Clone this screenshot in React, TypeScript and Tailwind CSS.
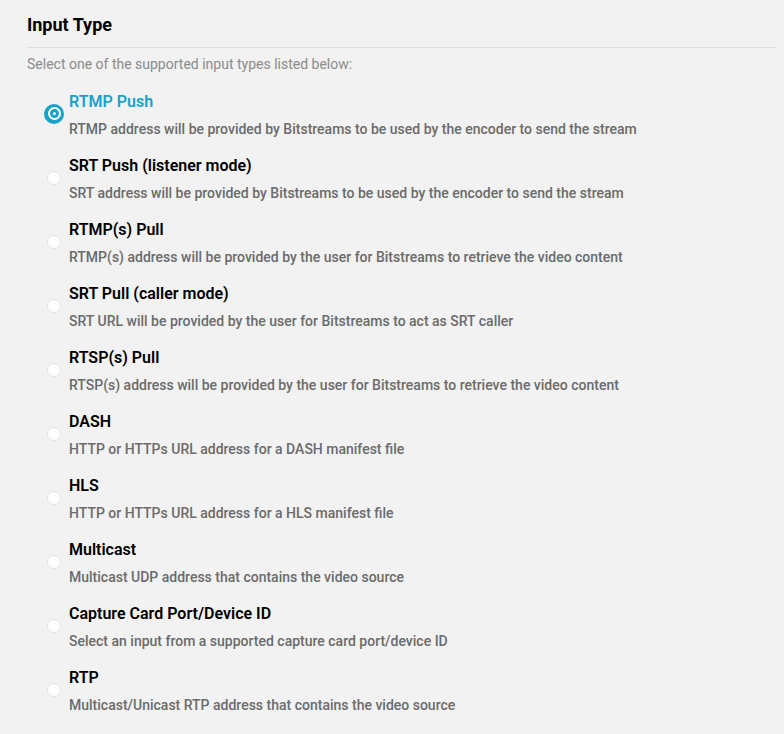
const inputTypes = [
  {
    id: 'rtmp-push',
    title: 'RTMP Push',
    body: 'RTMP address will be provided by Bitstreams to be used by the encoder to send the stream',
  },
  {
    id: 'srt-push',
    title: 'SRT Push (listener mode)',
    body: 'SRT address will be provided by Bitstreams to be used by the encoder to send the stream',
  },
  {
    id: 'rtmp-pull',
    title: 'RTMP(s) Pull',
    body: 'RTMP(s) address will be provided by the user for Bitstreams to retrieve the video content',
  },
  {
    id: 'srt-pull',
    title: 'SRT Pull (caller mode)',
    body: 'SRT URL will be provided by the user for Bitstreams to act as SRT caller',
  },
  {
    id: 'rtsp-pull',
    title: 'RTSP(s) Pull',
    body: 'RTSP(s) address will be provided by the user for Bitstreams to retrieve the video content',
  },
  {
    id: 'dash',
    title: 'DASH',
    body: 'HTTP or HTTPs URL address for a DASH manifest file',
  },
  {
    id: 'hls',
    title: 'HLS',
    body: 'HTTP or HTTPs URL address for a HLS manifest file',
  },
  {
    id: 'multicast',
    title: 'Multicast',
    body: 'Multicast UDP address that contains the video source',
  },
  {
    id: 'capture',
    title: 'Capture Card Port/Device ID',
    body: 'Select an input from a supported capture card port/device ID',
  },
  {
    id: 'rtp',
    title: 'RTP',
    body: 'Multicast/Unicast RTP address that contains the video source',
  },
]

function Radio({ checked }: { checked: boolean }) {
  if (checked) {
    return (
      <span className="w-5 h-5 rounded-full bg-[#16a2c9] flex items-center justify-center">
        <span className="w-[13px] h-[13px] rounded-full border-2 border-white bg-[#16a2c9] flex items-center justify-center">
          <span className="w-[3px] h-[3px] rounded-full bg-white" />
        </span>
      </span>
    )
  }
  return <span className="w-[14px] h-[14px] rounded-full bg-white border border-[#e1e2e6]" />
}

export default function App() {
  const selected = 'rtmp-push'

  return (
    <div className="min-h-[734px] bg-[#f1f2f1] pl-[27px] pr-[7px] pt-[11px] font-['Roboto',sans-serif]">
      <h2 className="text-[18px] leading-[28px] font-bold text-black pb-2 border-b border-[#dcdde1]">
        Input Type
      </h2>
      <p className="mt-[6px] text-[14px] leading-[20px] text-[#8b8b8b]">
        Select one of the supported input types listed below:
      </p>

      <div className="mt-[16px] pl-[17px] flex flex-col gap-[13px]">
        {inputTypes.map((t) => {
          const isOn = t.id === selected
          return (
            <label key={t.id} className="flex items-center gap-[5px] cursor-pointer">
              <span className="w-5 flex justify-center -mt-1">
                <Radio checked={isOn} />
              </span>
              <span className="flex flex-col gap-[3px]">
                <span
                  className={`text-[16px] leading-[24px] font-semibold ${
                    isOn ? 'text-[#16a2c9]' : 'text-black'
                  }`}
                >
                  {t.title}
                </span>
                <span className="text-[14px] leading-[24px] font-medium text-[#6b6b6b]">{t.body}</span>
              </span>
            </label>
          )
        })}
      </div>
    </div>
  )
}
